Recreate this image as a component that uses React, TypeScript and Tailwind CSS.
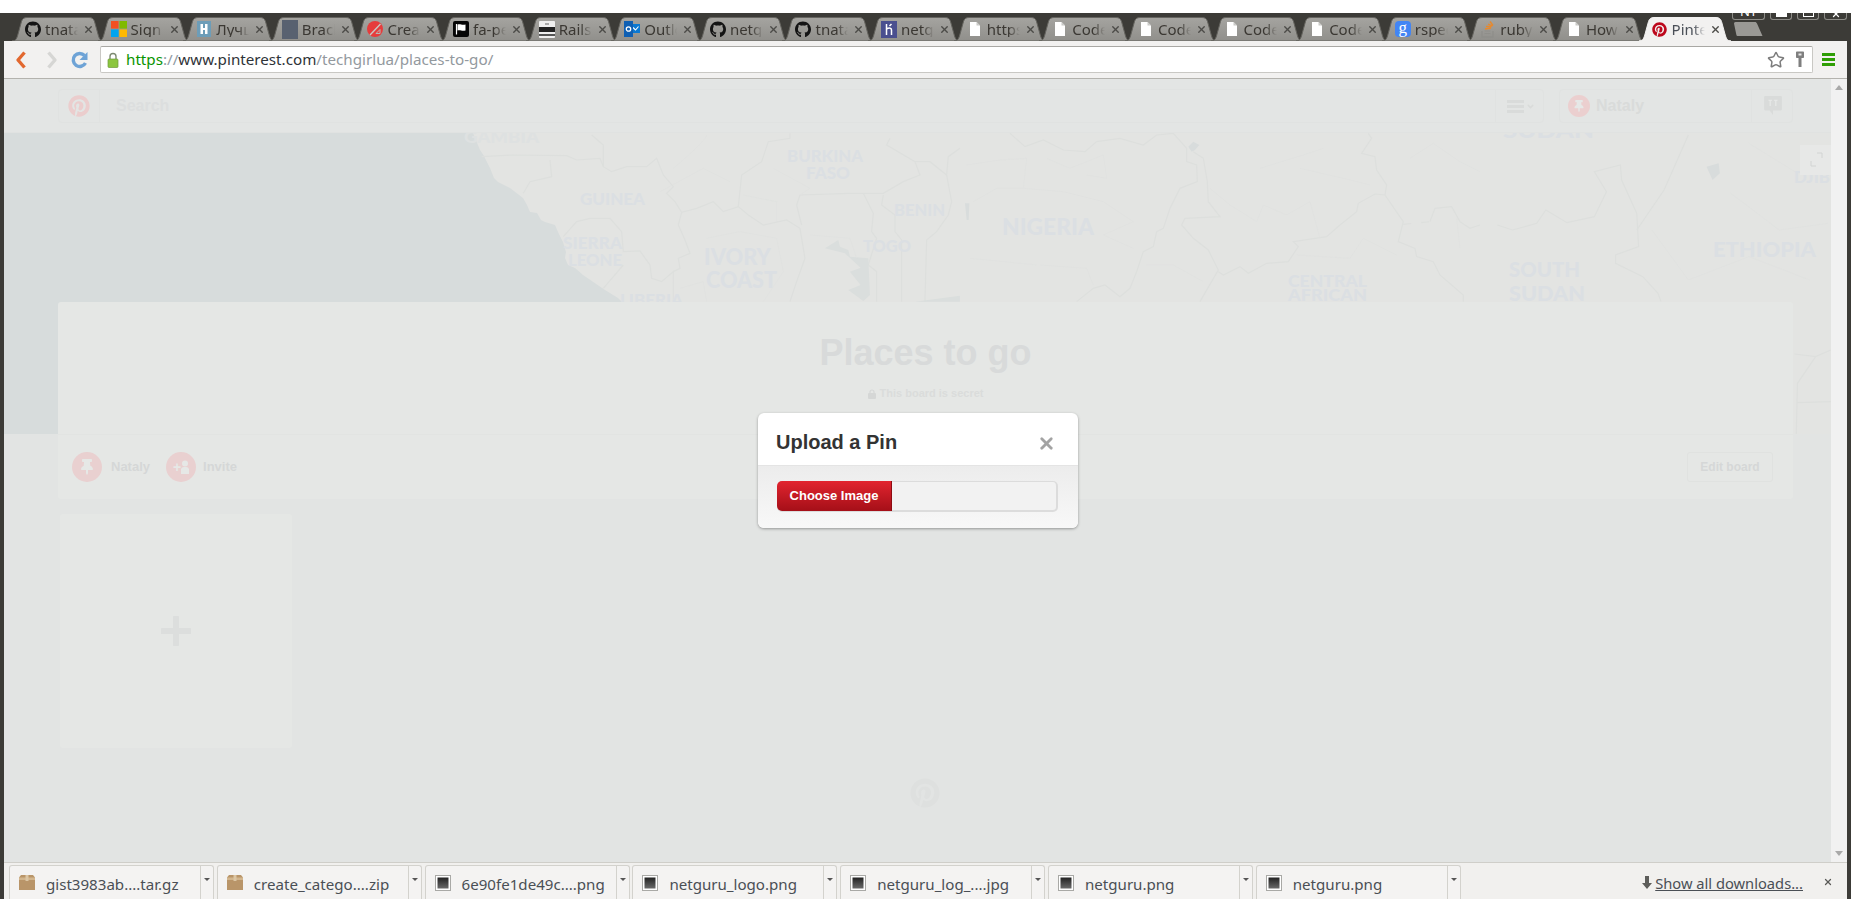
import { X, Star, ChevronDown } from "lucide-react";
import { FaGithub, FaPinterest, FaThumbtack } from "react-icons/fa";
import type { ReactNode } from "react";

const uiFont = "font-['Noto_Sans',sans-serif]";
const webFont = "font-['Liberation_Sans',Arial,sans-serif]";

function Doc() {
  return (
    <svg width="16" height="16" viewBox="0 0 16 16">
      <path d="M3 1h6.500L13 4.500V15H3z" fill="#fff" />
      <path d="M9.500 1v3.500H13" fill="#c9c9c6" />
    </svg>
  );
}

function Github() {
  return <FaGithub size={17} className="text-[#141414]" />;
}

function Microsoft() {
  return (
    <svg width="16" height="16" viewBox="0 0 16 16">
      <rect width="7.6" height="7.6" fill="#f25022" />
      <rect x="8.4" width="7.6" height="7.6" fill="#7fba00" />
      <rect y="8.4" width="7.6" height="7.6" fill="#00a4ef" />
      <rect x="8.4" y="8.4" width="7.6" height="7.6" fill="#ffb900" />
    </svg>
  );
}

function Habr() {
  return (
    <svg width="14" height="16" viewBox="0 0 14 16">
      <rect width="14" height="16" fill="#6d9db8" />
      <path d="M3.500 3h2.500v4h2V3h2.500v10H8V9H6v4H3.500z" fill="#fff" />
    </svg>
  );
}

function Brac() {
  return <div className="w-4 h-[19px] bg-[#586170]" />;
}

function Crea() {
  return (
    <svg width="16" height="16" viewBox="0 0 16 16">
      <circle cx="8" cy="8" r="8" fill="#e63c3c" />
      <path d="M3 14L13.500 3" stroke="#c9c8c4" strokeWidth="1.400" fill="none" />
      <path d="M9 12.500L13 8.500V12.500Z" fill="none" stroke="#b8b7b3" strokeWidth="1" />
    </svg>
  );
}

function FlagIcon() {
  return (
    <svg width="16" height="16" viewBox="0 0 16 16">
      <rect width="16" height="16" rx="2" fill="#050505" />
      <path d="M3.500 3v10.500" stroke="#fff" strokeWidth="1.200" />
      <path d="M4.500 3.500c3-1 4 1 8 0v6c-4 1-5-1-8 0z" fill="#fff" />
    </svg>
  );
}

function RailsIcon() {
  return (
    <svg width="16" height="17" viewBox="0 0 16 17">
      <rect width="16" height="17" rx="1" fill="#efefef" />
      <rect y="6" width="16" height="5" fill="#222" />
      <rect y="13" width="16" height="2" fill="#555" />
      <rect x="6" y="2" width="4" height="2" fill="#aaa" />
    </svg>
  );
}

function Outlook() {
  return (
    <svg width="16" height="16" viewBox="0 0 16 16">
      <rect x="7" y="3" width="9" height="9" fill="#0b78d1" />
      <path d="M9 6.500l2.500 2.500 3-3.500" stroke="#fff" strokeWidth="1.100" fill="none" />
      <rect width="9" height="16" fill="#0f5fb3" />
      <circle cx="4.500" cy="8" r="2.200" fill="none" stroke="#fff" strokeWidth="1.300" />
    </svg>
  );
}

function Heroku() {
  return (
    <svg width="16" height="17" viewBox="0 0 16 17">
      <rect width="16" height="17" fill="#4a4f8f" />
      <path d="M5.500 3v11M5.500 8c3-1.500 5-1 5 1v5M10.500 3l-2 2" stroke="#fff" strokeWidth="1.500" fill="none" />
    </svg>
  );
}

function GoogleG() {
  return (
    <div className="w-4 h-4 rounded-sm bg-[#4285f4] flex items-center justify-center text-white text-[17px] leading-none font-['Liberation_Serif',serif] pb-1">
      g
    </div>
  );
}

function StackIcon() {
  return (
    <svg width="16" height="17" viewBox="0 0 16 17">
      <path d="M2 10v6h11v-6" fill="none" stroke="#8f8e8a" strokeWidth="1.300" />
      <path d="M4.500 12.500h6M4.500 10h6" stroke="#8f8e8a" strokeWidth="1.200" />
      <path d="M5 8l6-1M6 5.500l5.500 0M8 3l4.500 2M10 0.500l3 4" stroke="#e8892c" strokeWidth="1.300" />
    </svg>
  );
}

function PinterestIcon() {
  return <FaPinterest size={15} className="text-[#bd081c]" />;
}

const tabs: { title: string; icon: ReactNode }[] = [
  { title: "tnatanel", icon: <Github /> },
  { title: "Sign in", icon: <Microsoft /> },
  { title: "Лучшие", icon: <Habr /> },
  { title: "Bracket", icon: <Brac /> },
  { title: "Create", icon: <Crea /> },
  { title: "fa-pen", icon: <FlagIcon /> },
  { title: "Rails", icon: <RailsIcon /> },
  { title: "Outlook", icon: <Outlook /> },
  { title: "netguru", icon: <Github /> },
  { title: "tnatanel", icon: <Github /> },
  { title: "netguru", icon: <Heroku /> },
  { title: "https", icon: <Doc /> },
  { title: "Code", icon: <Doc /> },
  { title: "Code", icon: <Doc /> },
  { title: "Code", icon: <Doc /> },
  { title: "Code", icon: <Doc /> },
  { title: "rspec", icon: <GoogleG /> },
  { title: "ruby on", icon: <StackIcon /> },
  { title: "How to", icon: <Doc /> },
  { title: "Pinterest", icon: <PinterestIcon /> },
];

function Tab({ title, icon, active }: { title: string; icon: ReactNode; active?: boolean }) {
  return (
    <div className={`relative shrink-0 w-[92px] h-[24px] -mr-[6.4px] ${active ? "z-10" : ""}`}>
      <svg className="absolute inset-0" width="92" height="24" viewBox="0 0 92 24">
        <defs>
          <linearGradient id="inactiveTab" x1="0" y1="0" x2="0" y2="1">
            <stop offset="0" stopColor="#a5a4a0" />
            <stop offset="1" stopColor="#908f8b" />
          </linearGradient>
        </defs>
        <path
          d="M0 24C3.500 24 4.500 22 5.500 19L9.500 4.500C10.300 1.800 12 .5 15 .5H77C80 .5 81.700 1.800 82.500 4.500L86.500 19C87.500 22 88.500 24 92 24Z"
          fill={active ? "#f2f1f0" : "url(#inactiveTab)"}
          stroke={active ? "#f2f1f0" : "#65645f"}
          strokeWidth="1"
        />
      </svg>
      <div className="relative flex items-center h-full pl-[13px]">
        <div className="w-[16px] flex justify-center shrink-0">{icon}</div>
        <div
          className={`ml-[4px] w-[33px] overflow-hidden whitespace-nowrap text-[15px] leading-none [mask-image:linear-gradient(to_right,black_65%,transparent)] ${uiFont} ${
            active ? "text-[#4a4f57]" : "text-[#3b3833]"
          }`}
        >
          {title}
        </div>
        <X size={11} strokeWidth={3} className="ml-[5px] text-[#4c4b48]" />
      </div>
    </div>
  );
}

function WindowControls() {
  return (
    <div className="absolute top-0 right-0 flex gap-[5px]">
      <div className="w-[33px] h-[7px] border border-t-0 border-[#8d8c87] rounded-b-[3px] overflow-hidden flex justify-center">
        <span className={`text-white text-[13px] leading-none -mt-[8px] ${uiFont}`}>NT</span>
      </div>
      <div className="w-[22px] h-[7px] border border-t-0 border-[#8d8c87] rounded-b-[3px] flex justify-center">
        <div className="w-[11px] h-[4px] bg-white" />
      </div>
      <div className="w-[22px] h-[7px] border border-t-0 border-[#8d8c87] rounded-b-[3px] flex justify-center">
        <div className="w-[11px] h-[4px] border border-t-0 border-white" />
      </div>
      <div className="w-[23px] h-[7px] border border-t-0 border-[#8d8c87] rounded-b-[3px] flex justify-center overflow-hidden">
        <X size={10} strokeWidth={3} className="text-white -mt-[4px]" />
      </div>
    </div>
  );
}

function TabStrip() {
  return (
    <div className="relative h-[28px] bg-[#3c3b37] flex items-end pl-[8px]">
      {tabs.map((t, i) => (
        <Tab key={i} title={t.title} icon={t.icon} active={i === tabs.length - 1} />
      ))}
      <svg className="ml-[9px] mb-[5px] shrink-0" width="30" height="14" viewBox="0 0 30 14">
        <path d="M1 1.500C1 .800 1.500 0 2.500 0H22C23 0 23.500.6 24 1.500L29.500 14H5C4 14 3.500 13.500 3.300 12.500Z" fill="#9a9995" />
      </svg>
      <WindowControls />
    </div>
  );
}

function Toolbar() {
  return (
    <div className="h-[38px] bg-[#f2f1f0] border-b border-[#b4b3ae] flex items-center shrink-0">
      <svg className="ml-[11px]" width="12" height="18" viewBox="0 0 12 18">
        <path d="M9.500 1.500L3 9l6.500 7.500" fill="none" stroke="#e2682f" strokeWidth="3.400" strokeLinejoin="round" />
      </svg>
      <svg className="ml-[19px]" width="12" height="18" viewBox="0 0 12 18">
        <path d="M2.500 1.500L9 9l-6.500 7.500" fill="none" stroke="#d6d6d4" strokeWidth="3.400" strokeLinejoin="round" />
      </svg>
      <svg className="ml-[13px]" width="17" height="18" viewBox="0 0 17 18">
        <path d="M13.500 4.500A6.500 6.500 0 1 0 14.500 12" fill="none" stroke="#6ea3d6" strokeWidth="3.400" />
        <path d="M16.500 1v8h-8z" fill="#6ea3d6" />
      </svg>
      <div className="ml-[12px] w-[1713px] h-[27px] bg-white border border-[#c9c8c4] border-t-[#a9a8a4] rounded-[2px] flex items-center shrink-0">
        <svg className="ml-[6px]" width="12" height="16" viewBox="0 0 12 16">
          <path d="M3 7V4.500a3 3 0 0 1 6 0V7" fill="none" stroke="#7d8a72" strokeWidth="1.400" />
          <rect x="1" y="7" width="10" height="8.500" rx="1" fill="#8cc63f" stroke="#6f9a3c" strokeWidth=".7" />
        </svg>
        <div className={`ml-[7px] text-[15.2px] leading-none whitespace-nowrap ${uiFont}`}>
          <span className="text-[#0a9400]">https</span>
          <span className="text-[#8f9aa3]">://</span>
          <span className="text-[#2f3338]">www.pinterest.com</span>
          <span className="text-[#93999e]">/techgirlua/places-to-go/</span>
        </div>
        <div className="ml-auto flex items-center gap-[10px] mr-[7px]">
          <Star size={18} strokeWidth={2} className="text-[#7c7c7c]" />
          <svg width="10" height="17" viewBox="0 0 10 17">
            <path d="M1 1.500C1 .800 1.500.5 2 .5H8C8.500.5 9 .8 9 1.500V6C9 6.800 8.500 7 8 7H6.500V16H3.500V7H2C1.500 7 1 6.800 1 6Z" fill="#7f7f7f" />
            <rect x="3.500" y="2.500" width="3" height="2" fill="#e8e8e8" />
          </svg>
        </div>
      </div>
      <div className="ml-[9px] flex flex-col gap-[2px]">
        <div className="w-[13px] h-[3px] bg-[#2f9e05]" />
        <div className="w-[13px] h-[3px] bg-[#2f9e05]" />
        <div className="w-[13px] h-[3px] bg-[#2f9e05]" />
      </div>
    </div>
  );
}

function PinterestHeader() {
  return (
    <div className="h-[54px] bg-[#e3e5e4] border-b border-[#e0e2e1] pt-[10px] pl-[54px] flex shrink-0">
      <div className={`w-[1486px] h-[34px] border border-[#e0e2e1] rounded-[4px] flex items-center ${webFont}`}>
        <div className="w-[41px] flex justify-center border-r border-[#e0e2e1] h-full items-center">
          <FaPinterest size={22} className="text-[#ebcdcd]" />
        </div>
        <span className="ml-[16px] text-[16px] font-bold text-[#dcdede]">Search</span>
        <div className="ml-auto w-[48px] h-full border-l border-[#e0e2e1] flex items-center pl-[11px] gap-[2px]">
          <div className="flex flex-col gap-[2px]">
            <div className="w-[17px] h-[3px] bg-[#d9dbda]" />
            <div className="w-[17px] h-[3px] bg-[#d9dbda]" />
            <div className="w-[17px] h-[3px] bg-[#d9dbda]" />
          </div>
          <ChevronDown size={9} strokeWidth={4} className="text-[#d9dbda]" />
        </div>
      </div>
      <div className={`ml-[15px] w-[234px] h-[34px] border border-[#e0e2e1] rounded-[4px] flex items-center ${webFont}`}>
        <div className="ml-[8px] w-[22px] h-[22px] rounded-full bg-[#ebcfcf] flex items-center justify-center">
          <FaThumbtack size={12} className="text-[#e6e8e7]" />
        </div>
        <span className="ml-[6px] text-[16px] font-bold text-[#d9dbda]">Nataly</span>
        <div className="ml-auto w-[41px] h-full border-l border-[#e0e2e1] flex items-center justify-center pl-[2px]">
          <svg width="18" height="20" viewBox="0 0 16 18">
            <path d="M0 1a1 1 0 0 1 1-1h14a1 1 0 0 1 1 1v11a1 1 0 0 1-1 1H8v4l-3-4H1a1 1 0 0 1-1-1z" fill="#d9dbda" />
            <path d="M4 4h3M5.500 4v5M9 4h3M10.500 4v5" stroke="#e6e8e7" strokeWidth="1.200" />
          </svg>
        </div>
      </div>
    </div>
  );
}

const labels: { t: string; x: number; y: number; w: number; s: number; fill?: string }[] = [
  { t: "GAMBIA", x: 464, y: 143, w: 75, s: 17, fill: "#dee1e1" },
  { t: "GUINEA", x: 580, y: 205, w: 65, s: 17 },
  { t: "SIERRA", x: 563, y: 249, w: 59, s: 17 },
  { t: "LEONE", x: 568, y: 266, w: 54, s: 17 },
  { t: "LIBERIA", x: 620, y: 306, w: 63, s: 17 },
  { t: "IVORY", x: 704, y: 265, w: 67, s: 23 },
  { t: "COAST", x: 706, y: 288, w: 71, s: 23 },
  { t: "BURKINA", x: 787, y: 162, w: 76, s: 16 },
  { t: "FASO", x: 806, y: 179, w: 44, s: 16 },
  { t: "BENIN", x: 894, y: 216, w: 51, s: 16 },
  { t: "TOGO", x: 863, y: 252, w: 48, s: 16 },
  { t: "NIGERIA", x: 1002, y: 235, w: 92, s: 23 },
  { t: "CENTRAL", x: 1288, y: 287, w: 79, s: 16 },
  { t: "AFRICAN", x: 1288, y: 301, w: 79, s: 16 },
  { t: "SOUTH", x: 1509, y: 277, w: 71, s: 20 },
  { t: "SUDAN", x: 1509, y: 301, w: 76, s: 20 },
  { t: "SUDAN", x: 1503, y: 138, w: 91, s: 20 },
  { t: "ETHIOPIA", x: 1713, y: 257, w: 103, s: 20 },
  { t: "DJIB", x: 1794, y: 183, w: 36, s: 17 },
];

function MapView() {
  const thick = { fill: "none", stroke: "#dddfdd", strokeWidth: 1.2, vectorEffect: "non-scaling-stroke" as const };
  const thin = { fill: "none", stroke: "#e0e1df", strokeWidth: 0.7, vectorEffect: "non-scaling-stroke" as const };
  return (
    <div className="h-[301px] shrink-0 bg-[#e3e4e2]">
      <svg width="1827" height="301" viewBox="4 133 1827 301" className="block">
        <path
          d="M4 133H473L480 150L484 156L490 168L494 178L498 182L510 188L523 198L527 205L530 212L537 213L541 220L545 222L555 225L558 232L563 242L566 252L565 258L568 265L575 268L583 275L605 290L618 298L640 320V434H4Z"
          fill="#d7dcdc"
        />
        <g transform="translate(440 125) scale(.3333)">
          <path
            {...thick}
            d="M125 95L215 90L380 92L410 105L480 100L490 125L515 140L560 125L620 125L650 100L670 150L700 185L680 205L705 230L725 262L770 250L820 230L850 260L895 245L925 270L970 300L1040 285L1080 310L1095 400L1070 470L1050 530"
          />
          <path {...thick} d="M490 125L490 60L455 30M330 105L335 155L270 170L250 205" />
          <path {...thick} d="M895 245L905 150L965 110L985 50L1050 40L1050 25" />
          <path {...thick} d="M1070 240L1080 210L1230 205L1270 205L1330 205L1390 170L1440 150L1425 110L1340 60L1350 40" />
          <path {...thick} d="M1425 110L1470 110L1520 150L1525 95L1560 70" />
          <path {...thick} d="M1070 240L1085 300M1270 205L1300 265L1295 320L1310 340L1285 420L1310 440L1310 530" />
          <path {...thick} d="M1330 210L1325 240L1365 270L1365 320L1385 345L1385 530" />
          <path {...thick} d="M1520 150L1535 230L1525 270L1490 320L1460 345L1455 530" />
          <path {...thick} d="M370 335L410 290L450 280L510 280L545 320L550 380L600 378L630 420L635 460L665 470L700 440L700 530M550 420L490 490" />
          <path {...thick} d="M725 262L715 300L735 345L750 385L715 400L720 430L700 440" />
          <path
            d="M1155 370L1195 345L1200 365L1225 375L1230 395L1285 400L1290 510L1270 528L1225 495L1262 480L1230 440L1262 428L1215 385Z"
            fill="#dadedd"
          />
          <path {...thin} d="M700 130C760 80 800 40 800 30M660 200L790 130L870 170M1000 130L1110 190L1080 210M910 210L1010 230L1010 290M800 340L900 320L1010 340L1030 440L970 530M720 490L790 470L800 530M1110 330L1230 340L1250 400" />
          <path d="M1425 530L1560 512V530Z" fill="#dadedd" />
        </g>
        <g transform="translate(960 125) scale(.3333)">
          <path
            {...thick}
            d="M150 25L195 65L250 45L310 75L375 80L410 50L480 40L550 60L590 30L640 25L680 70L680 110L710 120L712 170L660 190L630 250L610 310L590 320L580 365L550 380L530 440L510 490L480 515L435 480L400 490L350 530"
          />
          <path {...thick} d="M700 80L730 100L742 170L745 230L780 275L675 280L665 300L700 340L745 375L775 435L720 530" />
          <path
            {...thick}
            d="M775 440L790 450L840 425L865 445L920 415L985 410L1015 365L1000 350L1100 335L1140 300L1190 260L1195 235L1245 207L1275 210L1330 290L1315 350L1365 370L1370 395L1420 410L1440 450L1510 510L1510 530"
          />
          <path {...thick} d="M1275 210L1280 180L1250 135L1245 95L1205 85L1235 40L1225 25" />
          <path {...thick} d="M1410 290L1425 250L1475 245L1500 290L1530 310L1560 300" />
          <path {...thick} strokeDasharray="8 10" d="M1330 298L1410 290" />
          <path {...thin} d="M20 120L120 105L200 100L190 190L110 190L40 230M260 100L330 130L430 90L440 160L380 150M190 190L310 200L430 230L520 290L430 330L520 370M240 420L380 430L400 480M30 400L130 410L230 420M560 420L640 420L730 470M750 190L810 240L890 290L910 240L980 270L1050 230L1080 340M900 130L1030 90L1090 70M1020 130L1150 160L1230 180M1010 390L1170 400L1210 340L1310 390M1350 100L1420 55L1500 110L1560 140M1490 280L1500 370" />
          <path d="M685 65L700 50L718 60L705 75L695 80Z" fill="#d8dcdc" />
          <path d="M15 235L28 235L26 285L20 285Z" fill="#d8dcdc" />
        </g>
        <g transform="translate(900 130) scale(.6064 .3333)">
          <path {...thick} d="M985 285L1010 300L1050 280L1065 240L1100 278L1145 260L1165 185L1145 125L1188 105L1190 150L1215 250L1218 350L1180 375L1180 400L1225 440L1250 490L1255 515" />
          <path {...thick} d="M1215 300L1260 180L1300 15" />
          <path {...thick} d="M1475 672L1510 680L1535 660M1510 680L1480 760L1478 912M1480 818L1535 815" />
          <path {...thin} d="M1240 300L1300 450L1400 380L1500 450M1370 190L1450 300L1530 280M1400 40L1480 130L1535 100" />
          <path d="M1330 110L1350 100L1352 130L1340 150Z" fill="#d8dcdc" />
        </g>
        {labels.map((l) => (
          <text
            key={`${l.t}${l.y}`}
            x={l.x}
            y={l.y}
            textLength={l.w}
            lengthAdjust="spacingAndGlyphs"
            fontSize={l.s}
            fontWeight="900"
            fill={l.fill ?? "#dbdfe3"}
            fontFamily="Lato, sans-serif"
          >
            {l.t}
          </text>
        ))}
        <rect x="1800" y="145" width="31" height="30" fill="#e7e8e7" />
        <path d="M1817 153h5v5M1811 161v5h5" fill="none" stroke="#d2d4d3" strokeWidth="1" />
      </svg>
    </div>
  );
}

function BoardCard() {
  return (
    <div className={`relative -mt-[132px] ml-[54px] w-[1735px] h-[197px] shrink-0 bg-[#e5e7e5] rounded-[3px] flex flex-col ${webFont}`}>
      <div className="h-[132px] flex flex-col items-center">
        <h1 className="mt-[29px] text-[36px] leading-[44px] font-bold text-[#d8dada]">Places to go</h1>
        <div className="mt-[13px] flex items-center gap-[4px] text-[11px] leading-none font-bold text-[#dadcdb]">
          <svg width="8" height="10" viewBox="0 0 8 10">
            <path d="M2 4.500V3a2 2 0 0 1 4 0v1.500" fill="none" stroke="#d5d7d6" strokeWidth="1.200" />
            <rect y="4" width="8" height="6" rx="1" fill="#d5d7d6" />
          </svg>
          This board is secret
        </div>
      </div>
      <div className="flex-1 border-t border-[#e2e4e2] flex items-center pl-[14px] pr-[20px]">
        <div className="w-[30px] h-[30px] rounded-full bg-[#e9d0d0] flex items-center justify-center">
          <FaThumbtack size={16} className="text-[#e6e8e6]" />
        </div>
        <span className="ml-[9px] text-[13px] font-bold text-[#d5d7d7]">Nataly</span>
        <div className="ml-[16px] w-[30px] h-[30px] rounded-full bg-[#e9d0d0] flex items-center justify-center text-[#e6e8e6] text-[14px] font-bold">
          +
          <svg width="8" height="14" viewBox="0 0 8 14">
            <circle cx="4" cy="3.500" r="3" fill="#e6e8e6" />
            <path d="M0 14V9a3 3 0 0 1 3-2h2a3 3 0 0 1 3 2v5z" fill="#e6e8e6" />
          </svg>
        </div>
        <span className="ml-[7px] text-[13px] font-bold text-[#d5d7d7]">Invite</span>
        <div className="ml-auto w-[86px] h-[30px] rounded-[3px] border border-[#e0e2e0] flex items-center justify-center text-[12px] font-bold text-[#d5d7d7]">
          Edit board
        </div>
      </div>
    </div>
  );
}

function AddPinCard() {
  return (
    <div className="mt-[15px] ml-[56px] w-[232px] h-[234px] shrink-0 bg-[#e5e7e5] rounded-[3px] flex items-center justify-center">
      <svg width="30" height="30" viewBox="0 0 30 30">
        <path d="M15 1.500v27M1.500 15h27" stroke="#dcdedd" strokeWidth="6" strokeLinecap="round" />
      </svg>
    </div>
  );
}

function UploadModal() {
  return (
    <div className={`absolute top-[334px] left-[754px] w-[320px] h-[115px] rounded-[6px] bg-white shadow-[0_1px_3px_rgba(0,0,0,0.35)] overflow-hidden flex flex-col ${webFont}`}>
      <div className="h-[53px] shrink-0 flex items-center pl-[18px] pr-[22px] border-b border-[#e4e4e4]">
        <h2 className="mt-[6px] text-[20px] font-bold text-[#333]">Upload a Pin</h2>
        <X size={19} strokeWidth={3.500} className="ml-auto mt-[8px] text-[#a3a3a3]" />
      </div>
      <div className="flex-1 bg-gradient-to-b from-[#ececec] to-[#f8f8f8] pt-[15px] pl-[19px]">
        <div className="w-[281px] h-[31px] rounded-[5px] border-2 border-l-0 border-t border-[#dcdcdc] bg-[#f2f2f2] flex">
          <div className="w-[115px] h-[30px] -mt-px rounded-l-[5px] bg-gradient-to-b from-[#e2242f] to-[#a50f18] border-r border-[#8e0b12] flex items-center justify-center text-[13px] font-bold text-white">
            Choose Image
          </div>
        </div>
      </div>
    </div>
  );
}

function DownloadIcon({ kind }: { kind: "box" | "image" }) {
  if (kind === "box") {
    return (
      <svg width="16" height="15" viewBox="0 0 16 15">
        <path d="M0 2.500L2 0h12l2 2.500V15H0z" fill="#b99569" />
        <path d="M0 2.500h16V5H0z" fill="#d3b68e" />
        <rect x="6.500" y="0" width="3" height="6" fill="#dcc6a4" />
      </svg>
    );
  }
  return (
    <svg width="16" height="16" viewBox="0 0 16 16">
      <defs>
        <linearGradient id="thumb" x1="0" y1="0" x2="0" y2="1">
          <stop offset="0" stopColor="#222" />
          <stop offset="1" stopColor="#6a6a6a" />
        </linearGradient>
      </defs>
      <rect x=".5" y=".5" width="15" height="15" fill="#fff" stroke="#a9a9a6" />
      <rect x="2.500" y="2.500" width="11" height="11" fill="url(#thumb)" />
    </svg>
  );
}

const downloads: { name: string; kind: "box" | "image" }[] = [
  { name: "gist3983ab....tar.gz", kind: "box" },
  { name: "create_catego....zip", kind: "box" },
  { name: "6e90fe1de49c....png", kind: "image" },
  { name: "netguru_logo.png", kind: "image" },
  { name: "netguru_log_....jpg", kind: "image" },
  { name: "netguru.png", kind: "image" },
  { name: "netguru.png", kind: "image" },
];

function DownloadBar() {
  return (
    <div className={`h-[37px] shrink-0 bg-[#f1f0ee] border-t border-[#cfcec9] pt-[2px] pl-[5px] flex items-start ${uiFont}`}>
      <div className="flex gap-[2.800px]">
        {downloads.map((d, i) => (
          <div key={i} className="w-[205px] h-[34px] bg-[#f4f3f2] border border-b-0 border-[#d3d2cd] rounded-t-[3px] flex">
            <div className="flex-1 flex items-center pl-[9px]">
              <DownloadIcon kind={d.kind} />
              <span className="ml-[11px] pt-[4px] text-[15.100px] leading-none whitespace-nowrap text-[#4a4f55]">{d.name}</span>
            </div>
            <div className="w-[13px] border-l border-[#d3d2cd] flex justify-center pt-[12px]">
              <div className="w-0 h-0 border-x-[3px] border-x-transparent border-t-[3px] border-t-[#555]" />
            </div>
          </div>
        ))}
      </div>
      <div className="ml-auto h-full flex items-center gap-[3px]">
        <svg width="10" height="13" viewBox="0 0 10 13">
          <path d="M3 0h4v7h3l-5 6-5-6h3z" fill="#5d5d5a" />
        </svg>
        <span className="pt-[2px] text-[14.700px] leading-none underline text-[#4a4f55] whitespace-nowrap">Show all downloads...</span>
        <X size={10} strokeWidth={3} className="ml-[17px] mr-[14px] text-[#5a5a57]" />
      </div>
    </div>
  );
}

function Scrollbar() {
  return (
    <div className="w-[16px] shrink-0 bg-[#f1f1f1] flex flex-col items-center justify-between py-[6px]">
      <div className="w-0 h-0 border-x-[4px] border-x-transparent border-b-[5px] border-b-[#a9a9a9]" />
      <div className="w-0 h-0 border-x-[4px] border-x-transparent border-t-[5px] border-t-[#a9a9a9]" />
    </div>
  );
}

export default function App() {
  return (
    <div className="w-[1851px] h-[912px] bg-white flex flex-col overflow-hidden">
      <div className="h-[13px] shrink-0" />
      <div className="h-[886px] shrink-0 bg-[#3c3b37] px-[4px] flex flex-col">
        <TabStrip />
        <Toolbar />
        <div className="flex-1 flex min-h-0">
          <main className="relative flex-1 bg-[#e2e4e3] flex flex-col overflow-hidden">
            <PinterestHeader />
            <MapView />
            <BoardCard />
            <AddPinCard />
            <div className="mt-[30px] ml-[906px] shrink-0">
              <FaPinterest size={30} className="text-[#dee0df]" />
            </div>
            <UploadModal />
          </main>
          <Scrollbar />
        </div>
        <DownloadBar />
      </div>
    </div>
  );
}
